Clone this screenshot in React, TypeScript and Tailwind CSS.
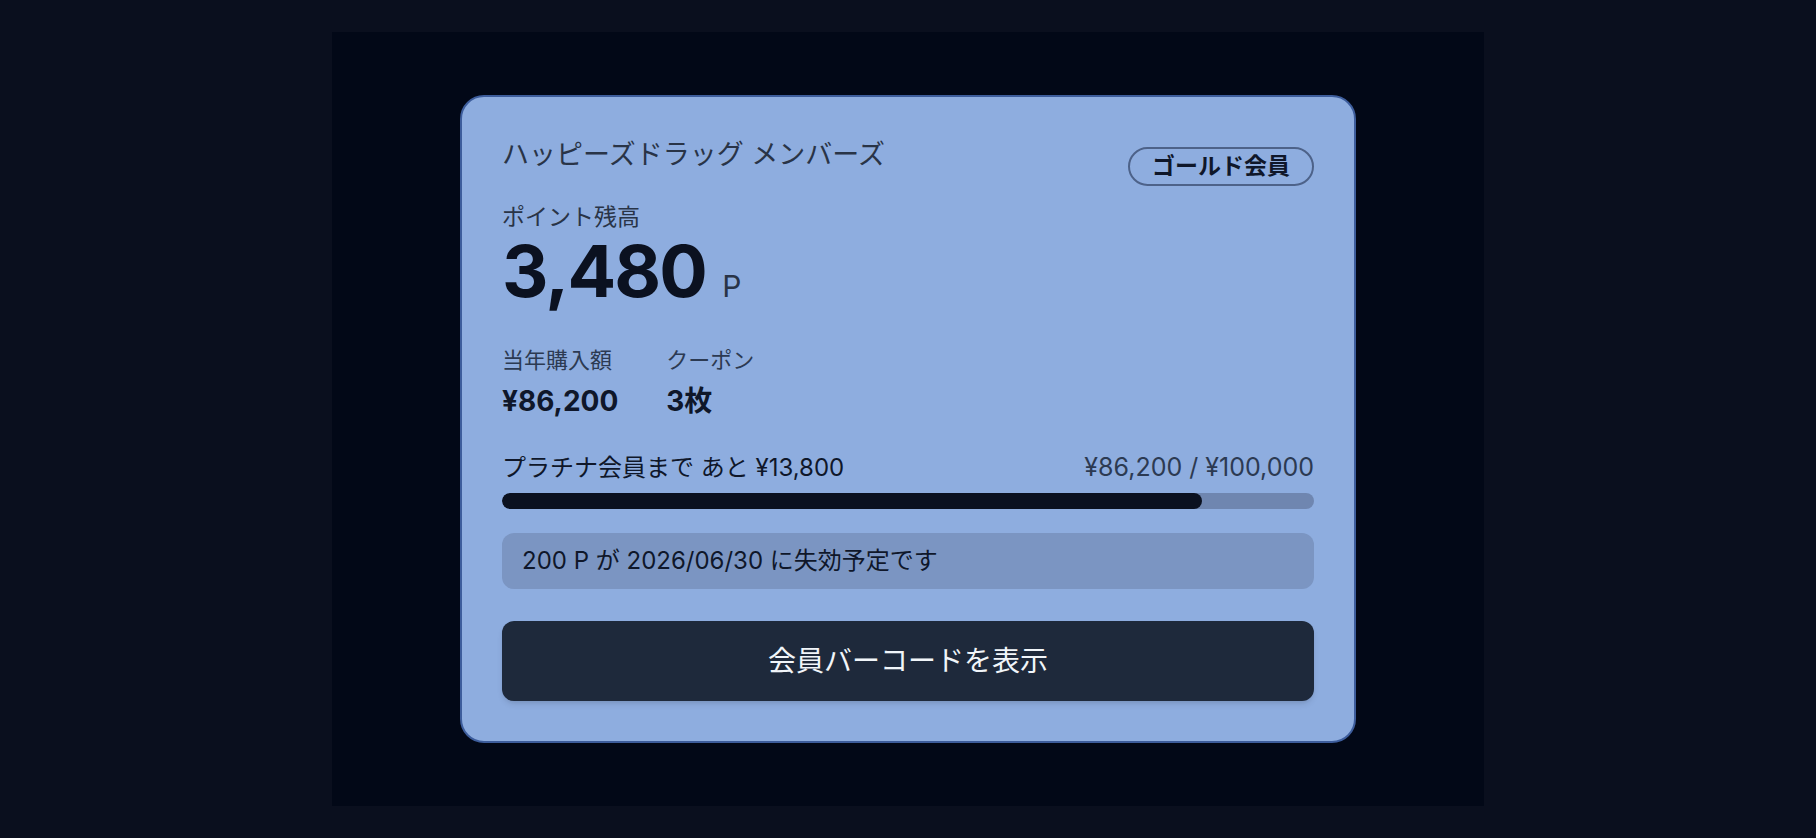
import React from "react";

export default function App() {
  const current = 86200;
  const goal = 100000;
  const pct = (current / goal) * 100;
  return (
    <div
      className="min-h-screen bg-[#0a0f1e] p-8"
      style={{ fontFamily: '"Inter", "Noto Sans CJK JP", sans-serif' }}
    >
      <div className="mx-auto flex h-[774px] max-w-6xl items-center justify-center bg-[#020817]">
        <div className="w-[896px] rounded-3xl border-2 border-[#3d5d9c] bg-[#8eaddf] p-10">
          <div className="flex items-start justify-between">
            <h1 className="text-[27px] leading-9 font-normal text-[#293447]">
              ハッピーズドラッグ メンバーズ
            </h1>
            <span className="mt-[10px] rounded-full border-2 border-[#4d6289] px-[22px] text-[23px] leading-[35px] font-bold text-[#0f172a]">
              ゴールド会員
            </span>
          </div>

          <div className="mt-[21px] text-[23px] leading-5 text-[#293447]">ポイント残高</div>
          <div className="flex items-baseline">
            <span className="text-[72px] leading-[88px] font-bold tracking-tight text-[#0b1120]">
              3,480
            </span>
            <span className="ml-4 text-[30px] leading-none text-[#293447]">P</span>
          </div>

          <div className="mt-[30px] flex gap-12">
            <div>
              <div className="text-[22px] leading-[30px] text-[#2c3a52]">当年購入額</div>
              <div className="mt-2 text-[28px] leading-9 font-bold text-[#0f172a]">¥86,200</div>
            </div>
            <div>
              <div className="text-[22px] leading-[30px] text-[#2c3a52]">クーポン</div>
              <div className="mt-2 text-[28px] leading-9 font-bold text-[#0f172a]">3枚</div>
            </div>
          </div>

          <div className="mt-[32px] flex items-baseline justify-between leading-8">
            <span className="text-[24px] text-[#0f172a]">プラチナ会員まで あと ¥13,800</span>
            <span className="text-[25px] text-[#2c3a52]">¥86,200 / ¥100,000</span>
          </div>
          <div className="mt-[9px] h-4 w-full overflow-hidden rounded-full bg-[#6f86b0]">
            <div className="h-full rounded-full bg-[#0b1120]" style={{ width: `${pct}%` }} />
          </div>

          <div className="mt-6 rounded-xl bg-[#7b95c2] px-5 py-3 text-[24px] leading-8 text-[#0f172a]">
            200 P が 2026/06/30 に失効予定です
          </div>

          <button className="mt-8 flex h-20 w-full items-center justify-center rounded-xl bg-[#1e293b] text-[28px] text-[#f1f5f9] shadow-md">
            会員バーコードを表示
          </button>
        </div>
      </div>
    </div>
  );
}
